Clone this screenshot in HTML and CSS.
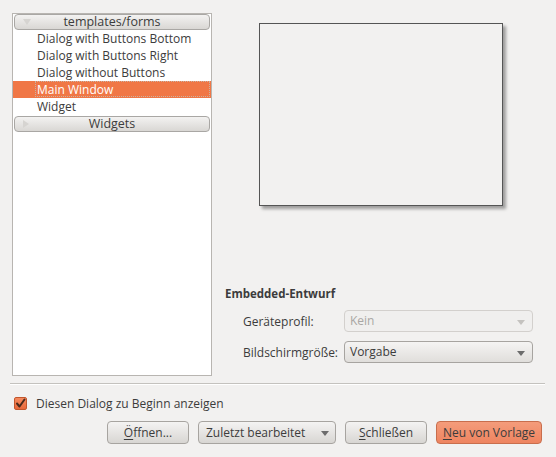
FILE: index.html
```html
<!DOCTYPE html>
<html>
<head>
<meta charset="utf-8">
<link rel="stylesheet" href="styles.css">
</head>
<body>
<div class="dialog">
  <div class="top">
    <div class="tree">
      <div class="group"><span class="tri tri-down"></span><span class="group-label">templates/forms</span></div>
      <div class="row">Dialog with Buttons Bottom</div>
      <div class="row">Dialog with Buttons Right</div>
      <div class="row">Dialog without Buttons</div>
      <div class="row selected"><span class="focus">Main Window</span></div>
      <div class="row">Widget</div>
      <div class="group group2"><span class="tri tri-right"></span><span class="group-label">Widgets</span></div>
    </div>
    <div class="right">
      <div class="preview-wrap"><div class="preview"></div></div>
      <div class="embedded">
        <div class="heading">Embedded-Entwurf</div>
        <div class="form">
          <div class="label">Geräteprofil:</div>
          <div class="combo disabled"><span>Kein</span><span class="arrow"></span></div>
          <div class="label">Bildschirmgröße:</div>
          <div class="combo"><span>Vorgabe</span><span class="arrow"></span></div>
        </div>
      </div>
    </div>
  </div>
  <div class="sep"></div>
  <div class="check-row">
    <span class="checkbox"><svg width="11" height="11" viewBox="0 0 11 11"><path d="M2 5.5 L4.5 8.5 L9.5 1.5" fill="none" stroke="#4a2a1c" stroke-width="2" stroke-linecap="round" stroke-linejoin="round"/></svg></span>
    <span>Diesen Dialog zu Beginn anzeigen</span>
  </div>
  <div class="buttons">
    <button class="btn b-open"><u>Ö</u>ffnen...</button>
    <button class="btn b-recent">Zuletzt bearbeitet<span class="arrow"></span></button>
    <button class="btn b-close"><u>S</u>chließen</button>
    <button class="btn primary b-new"><u>N</u>eu von Vorlage</button>
  </div>
</div>
</body>
</html>
```

FILE: styles.css
```css
* { box-sizing: border-box; }
html, body { margin: 0; padding: 0; }
body {
  width: 556px;
  height: 457px;
  background: #f2f1f0;
  font-family: "Open Sans", "DejaVu Sans", sans-serif;
  font-size: 12px;
  color: #3c3c3c;
  overflow: hidden;
}
.dialog { padding: 13px 0 0 12px; }
.top { display: flex; height: 363px; }
.tree {
  width: 200px;
  height: 363px;
  background: #fff;
  border: 1px solid #b8b5b1;
  padding: 0 1px;
}
.group {
  position: relative;
  height: 16px;
  border: 1px solid #a9a7a4;
  border-radius: 4px;
  background: linear-gradient(#f3f2f1, #d9d7d4);
  display: flex;
  align-items: center;
  justify-content: center;
  line-height: 14px;
  font-size: 12.5px;
}
.group2 { margin-top: 1px; }
.tri { position: absolute; left: 8px; top: 4px; width: 0; height: 0; }
.tri-down { border-left: 4px solid transparent; border-right: 4px solid transparent; border-top: 6px solid #d6d4d1; }
.tri-right { border-top: 4px solid transparent; border-bottom: 4px solid transparent; border-left: 6px solid #d6d4d1; top: 3px; }
.row {
  height: 17px;
  line-height: 17px;
  padding-left: 23px;
  white-space: nowrap;
}
.row.selected { background: #f07746; color: #fff; margin: 0 -1px; padding-left: 24px; }
.focus { display: inline-block; height: 16px; line-height: 15px; border: 1px dotted #c9b2a3; margin-left: -2px; padding-left: 1px; width: 175px; }
.right { flex: 1; display: flex; flex-direction: column; }
.preview-wrap { padding: 10px 0 0 47px; }
.preview {
  width: 244px;
  height: 183px;
  border: 1px solid #555;
  background: #f2f1f0;
  box-shadow: 3px 3px 3px rgba(0, 0, 0, 0.35);
}
.embedded { margin-top: auto; padding-left: 13px; padding-bottom: 13px; }
.heading { font-weight: bold; font-size: 11.5px; margin-bottom: 9px; }
.form {
  display: grid;
  grid-template-columns: 101px 189px;
  row-gap: 9px;
  padding-left: 18px;
  align-items: center;
}
.combo {
  position: relative;
  height: 22px;
  border: 1px solid #a7a4a0;
  border-radius: 4px;
  background: linear-gradient(#f5f4f3, #e0dedb);
  padding-left: 5px;
  line-height: 20px;
}
.combo.disabled { border-color: #d3d0cd; background: #f0efee; color: #a9a7a4; }
.arrow {
  position: absolute;
  right: 7px;
  top: 9px;
  width: 0; height: 0;
  border-left: 4px solid transparent;
  border-right: 4px solid transparent;
  border-top: 5px solid #6c6c6c;
}
.combo.disabled .arrow { border-top-color: #c4c2bf; }
.sep {
  margin: 7px 11px 0 -2px;
  height: 2px;
  border-top: 1px solid #c4c2be;
  border-bottom: 1px solid #fff;
}
.check-row { display: flex; align-items: center; height: 14px; margin-top: 11px; gap: 9px; padding-left: 2px; }
.checkbox {
  width: 13px; height: 13px;
  border: 1px solid #c2562c;
  border-radius: 2px;
  background: linear-gradient(#f58a5e, #e8683a);
  display: flex; align-items: center; justify-content: center;
}
.buttons { display: flex; gap: 9px; padding-left: 95px; margin-top: 11px; }
.btn {
  position: relative;
  height: 23px;
  font: inherit;
  color: #3c3c3c;
  border: 1px solid #a7a4a0;
  border-radius: 4px;
  background: linear-gradient(#f4f3f2, #d8d6d3);
  padding: 0;
  line-height: 20px;
}
.btn u { text-decoration-thickness: 1px; text-underline-offset: 2px; }
.b-open { width: 82px; }
.b-recent { width: 138px; text-align: left; padding-left: 7px; }
.b-recent .arrow { top: 9px; right: 6px; }
.b-close { width: 82px; }
.b-new { width: 106px; }
.btn.primary { border-color: #c86e4d; background: linear-gradient(#f49c7b, #ee8460); color: #3c3c3c; }
```
